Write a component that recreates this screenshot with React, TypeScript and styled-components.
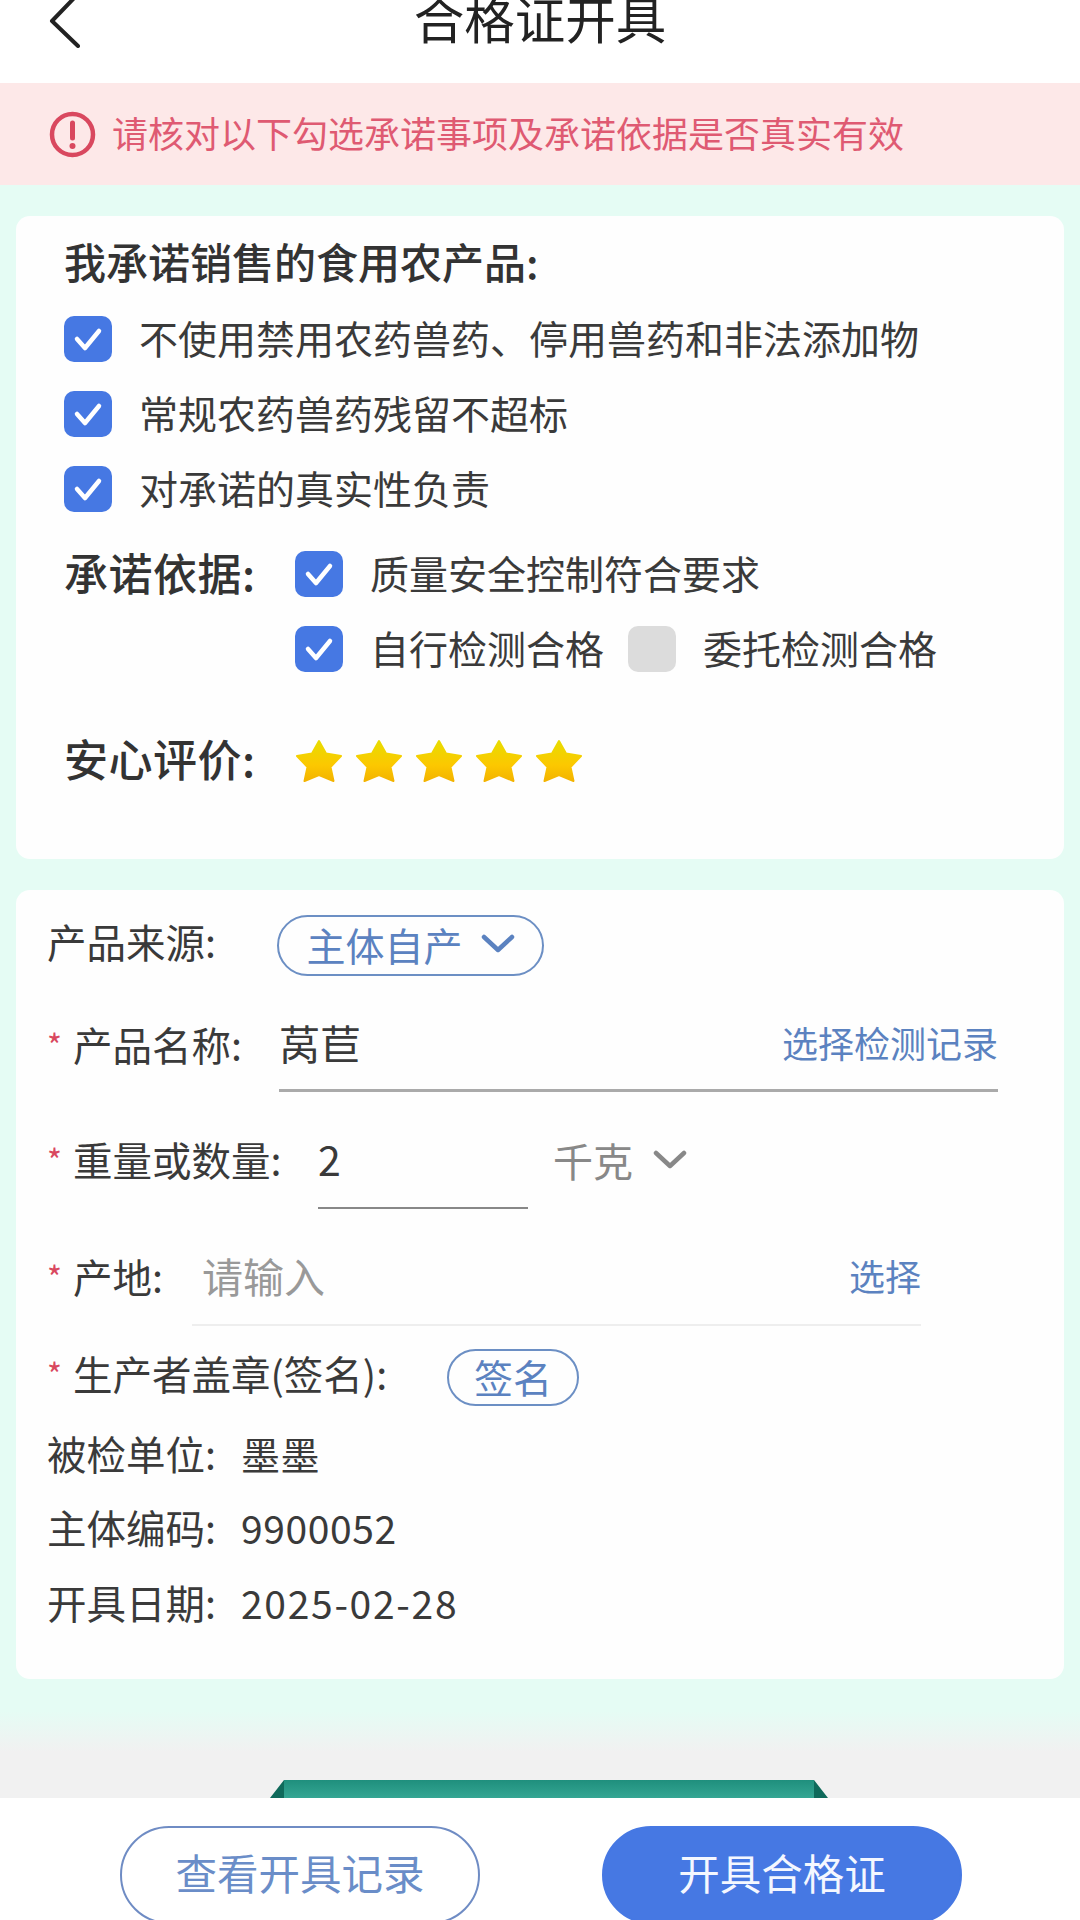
import styled, { createGlobalStyle } from "styled-components"

const GlobalStyle = createGlobalStyle`
  html, body {
    margin: 0;
    padding: 0;
    background: #fff;
  }
  body {
    font-family: "Noto Sans CJK SC", "Noto Sans", sans-serif;
    color: #333;
  }
`

const Page = styled.div`
  width: 1080px;
  height: 1920px;
  overflow: hidden;
  display: flex;
  flex-direction: column;
`

const Header = styled.header`
  height: 83px;
  flex: none;
  background: #fff;
  display: grid;
  grid-template-columns: 1fr auto 1fr;
  align-items: start;
`

const BackIcon = styled.svg`
  width: 40px;
  height: 48px;
  margin-left: 46px;
  display: block;
`

const Title = styled.h1`
  margin: -4px 0 0;
  font-size: 50.5px;
  font-weight: 400;
  line-height: 42px;
  color: #222;
`

const Alert = styled.div`
  height: 102px;
  flex: none;
  box-sizing: border-box;
  background: #fde8e8;
  display: flex;
  align-items: center;
  padding: 0 0 4px 49px;
  gap: 16px;
  font-size: 36px;
  color: #df5a72;
`

const AlertIcon = styled.svg`
  width: 47px;
  height: 47px;
  flex: none;
  margin-top: 4px;
`

const Body = styled.main`
  flex: none;
  background: #e5fcf4;
  padding: 31px 16px 3px;
  display: flex;
  flex-direction: column;
  gap: 31px;
`

const Card = styled.section<{ $pad: string }>`
  background: #fefefe;
  border-radius: 14px;
  padding: ${(p) => p.$pad};
`

const Heading = styled.div`
  height: 50px;
  line-height: 50px;
  font-size: 42px;
  font-weight: 500;
  margin-bottom: 15px;
`

const PromiseRow = styled.div`
  height: 75px;
  display: flex;
  align-items: center;
  font-size: 39px;
  color: #3a3a3a;
`

const BasisRows = styled.div`
  display: grid;
  grid-template-columns: 231px 1fr;
  margin-top: 10px;
`

const BasisTitle = styled.div`
  height: 75px;
  display: flex;
  align-items: center;
  padding-bottom: 4px;
  box-sizing: border-box;
  font-size: 44px;
  font-weight: 500;
  letter-spacing: 0.5px;
`

const Box = styled.span<{ $on?: boolean }>`
  width: 48px;
  height: 46px;
  flex: none;
  border-radius: 10px;
  background: ${(p) => (p.$on ? "#4678e3" : "#dcdcdc")};
  display: flex;
  align-items: center;
  justify-content: center;
`

const BoxText = styled.span<{ $last?: boolean }>`
  margin-left: 27px;
  margin-right: ${(p) => (p.$last ? "0" : "24px")};
  padding-bottom: 4px;
  white-space: nowrap;
`

const RatingRow = styled.div`
  height: 60px;
  margin-top: 45px;
  display: grid;
  grid-template-columns: 231px 1fr;
  align-items: center;
`

const RatingTitle = styled.div`
  font-size: 44px;
  font-weight: 500;
  letter-spacing: 0.5px;
  margin-top: -6px;
`

const Stars = styled.div`
  display: flex;
  gap: 12px;
`

const Row = styled.div<{ $h: number; $top: number }>`
  height: ${(p) => p.$h}px;
  margin-top: ${(p) => p.$top}px;
  display: flex;
  align-items: stretch;
  font-size: 39.5px;
  color: #3a3a3a;
`

const Label = styled.div<{ $w: number; $lift?: number }>`
  width: ${(p) => p.$w}px;
  flex: none;
  box-sizing: border-box;
  padding-bottom: ${(p) => p.$lift ?? 5}px;
  display: flex;
  align-items: center;
  white-space: nowrap;
`

const Required = styled.span`
  width: 26px;
  color: #d9485f;
  font-size: 32px;
`

const Pill = styled.div<{ $w: number; $gap?: number }>`
  width: ${(p) => p.$w}px;
  box-sizing: border-box;
  border: 2.5px solid #6c8fc4;
  border-radius: 40px;
  padding-bottom: 4px;
  display: flex;
  align-items: center;
  justify-content: center;
  gap: ${(p) => p.$gap ?? 0}px;
  font-size: 39px;
  color: #5b82c0;
`

const Field = styled.div<{ $w: number; $line: string; $weight: number }>`
  width: ${(p) => p.$w}px;
  box-sizing: border-box;
  border-bottom: ${(p) => p.$weight}px solid ${(p) => p.$line};
  padding-bottom: 5px;
  display: flex;
  align-items: center;
  justify-content: space-between;
  font-size: 41px;
`

const Placeholder = styled.span`
  color: #999;
  font-size: 41px;
  margin-left: 10px;
`

const LinkText = styled.span`
  font-size: 36px;
  color: #5b82c0;
`

const Unit = styled.div`
  display: flex;
  align-items: center;
  gap: 20px;
  margin-left: 25px;
  margin-bottom: 2px;
  font-size: 40px;
  color: #888;
`

const Value = styled.div<{ $track?: number }>`
  display: flex;
  align-items: center;
  padding-bottom: 5px;
  font-size: 39px;
  letter-spacing: ${(p) => p.$track ?? 0.6}px;
`

const Strip = styled.div`
  height: 116px;
  flex: none;
  background: linear-gradient(#e5fcf4 0%, #e5fcf4 25%, #f1f1f1 60%, #f1f1f1 100%);
  display: flex;
  align-items: flex-end;
  justify-content: center;
  padding-left: 18px;
`

const Ribbon = styled.svg`
  display: block;
`

const Footer = styled.footer`
  flex: 1;
  min-height: 0;
  background: #fff;
  padding: 28px 0 0 120px;
  display: flex;
  align-items: flex-start;
  gap: 122px;
`

const Action = styled.button<{ $solid?: boolean }>`
  width: 360px;
  height: 98px;
  flex: none;
  box-sizing: border-box;
  border-radius: 49px;
  border: 2.5px solid ${(p) => (p.$solid ? "#4678e3" : "#6f8cc4")};
  background: ${(p) => (p.$solid ? "#4678e3" : "#fff")};
  color: ${(p) => (p.$solid ? "#f4f7ff" : "#6a8dc8")};
  font-family: inherit;
  font-size: 41.5px;
  padding: 0 0 6px;
`

const Check = () => (
  <svg width="32" height="28" viewBox="0 0 32 28">
    <path d="M5 14 L13 23 L27 6" fill="none" stroke="#fff" strokeWidth="4.5" strokeLinecap="round" strokeLinejoin="round" />
  </svg>
)

const CheckBox = ({ on = true }: { on?: boolean }) => <Box $on={on}>{on && <Check />}</Box>

const Chevron = ({ color }: { color: string }) => (
  <svg width="34" height="20" viewBox="0 0 34 20">
    <path d="M3 3 L17 16 L31 3" fill="none" stroke={color} strokeWidth="4.5" strokeLinecap="round" strokeLinejoin="round" />
  </svg>
)

const Star = () => (
  <svg width="48" height="44" viewBox="0 0 48 44">
    <defs>
      <linearGradient id="starFill" x1="0" y1="0" x2="0" y2="1">
        <stop offset="0" stopColor="#e8dc00" />
        <stop offset="0.6" stopColor="#fcc800" />
        <stop offset="1" stopColor="#f3b300" />
      </linearGradient>
    </defs>
    <path
      d="M24 2 L31 14.5 L46 17 L35.5 28 L38.5 42 L24 36 L9.5 42 L12.5 28 L2 17 L17 14.5 Z"
      fill="url(#starFill)"
      stroke="url(#starFill)"
      strokeWidth="2"
      strokeLinejoin="round"
    />
  </svg>
)

const promises = ["不使用禁用农药兽药、停用兽药和非法添加物", "常规农药兽药残留不超标", "对承诺的真实性负责"]

export default function App() {
  return (
    <Page>
      <GlobalStyle />
      <Header>
        <BackIcon viewBox="0 0 40 48">
          <path d="M32 -6 L6 21 L32 46" fill="none" stroke="#222" strokeWidth="4" strokeLinecap="round" strokeLinejoin="round" />
        </BackIcon>
        <Title>合格证开具</Title>
      </Header>
      <Alert>
        <AlertIcon viewBox="0 0 47 47">
          <circle cx="23.5" cy="23.5" r="20.5" fill="none" stroke="#d9485f" strokeWidth="4.5" />
          <path d="M23.5 12 V27" stroke="#d9485f" strokeWidth="5" strokeLinecap="round" />
          <circle cx="23.5" cy="35" r="3" fill="#d9485f" />
        </AlertIcon>
        请核对以下勾选承诺事项及承诺依据是否真实有效
      </Alert>
      <Body>
        <Card $pad="20px 0 68px 48px">
          <Heading>我承诺销售的食用农产品:</Heading>
          {promises.map((text) => (
            <PromiseRow key={text}>
              <CheckBox />
              <BoxText $last>{text}</BoxText>
            </PromiseRow>
          ))}
          <BasisRows>
            <BasisTitle>承诺依据:</BasisTitle>
            <PromiseRow>
              <CheckBox />
              <BoxText $last>质量安全控制符合要求</BoxText>
            </PromiseRow>
            <span />
            <PromiseRow>
              <CheckBox />
              <BoxText>自行检测合格</BoxText>
              <CheckBox on={false} />
              <BoxText $last>委托检测合格</BoxText>
            </PromiseRow>
          </BasisRows>
          <RatingRow>
            <RatingTitle>安心评价:</RatingTitle>
            <Stars>
              <Star />
              <Star />
              <Star />
              <Star />
              <Star />
            </Stars>
          </RatingRow>
        </Card>
        <Card $pad="25px 0 45px 31px">
          <Row $h={61} $top={0}>
            <Label $w={230} $lift={10}>产品来源:</Label>
            <Pill $w={267} $gap={18}>
              主体自产
              <Chevron color="#5b82c0" />
            </Pill>
          </Row>
          <Row $h={92} $top={24}>
            <Label $w={232}>
              <Required>*</Required>产品名称:
            </Label>
            <Field $w={719} $line="#aaa" $weight={3}>
              莴苣
              <LinkText>选择检测记录</LinkText>
            </Field>
          </Row>
          <Row $h={96} $top={21}>
            <Label $w={271}>
              <Required>*</Required>重量或数量:
            </Label>
            <Field $w={210} $line="#888" $weight={2}>2</Field>
            <Unit>
              千克
              <Chevron color="#888" />
            </Unit>
          </Row>
          <Row $h={96} $top={21}>
            <Label $w={145}>
              <Required>*</Required>产地:
            </Label>
            <Field $w={729} $line="#eee" $weight={2}>
              <Placeholder>请输入</Placeholder>
              <LinkText>选择</LinkText>
            </Field>
          </Row>
          <Row $h={57} $top={23}>
            <Label $w={400} $lift={10}>
              <Required>*</Required>生产者盖章(签名):
            </Label>
            <Pill $w={132}>签名</Pill>
          </Row>
          <Row $h={60} $top={19}>
            <Label $w={194}>被检单位:</Label>
            <Value>墨墨</Value>
          </Row>
          <Row $h={60} $top={14}>
            <Label $w={194}>主体编码:</Label>
            <Value>9900052</Value>
          </Row>
          <Row $h={60} $top={15}>
            <Label $w={194}>开具日期:</Label>
            <Value $track={1.7}>2025-02-28</Value>
          </Row>
        </Card>
      </Body>
      <Strip>
        <Ribbon width="558" height="18" viewBox="0 0 558 18">
          <defs>
            <linearGradient id="ribbon" x1="0" y1="0" x2="0" y2="1">
              <stop offset="0" stopColor="#1f8f7d" />
              <stop offset="1" stopColor="#35a693" />
            </linearGradient>
          </defs>
          <rect x="14" width="530" height="18" fill="url(#ribbon)" />
          <path d="M14 0 L0 18 H14 Z M544 0 L558 18 H544 Z" fill="#0f6a5b" />
        </Ribbon>
      </Strip>
      <Footer>
        <Action>查看开具记录</Action>
        <Action $solid>开具合格证</Action>
      </Footer>
    </Page>
  )
}
